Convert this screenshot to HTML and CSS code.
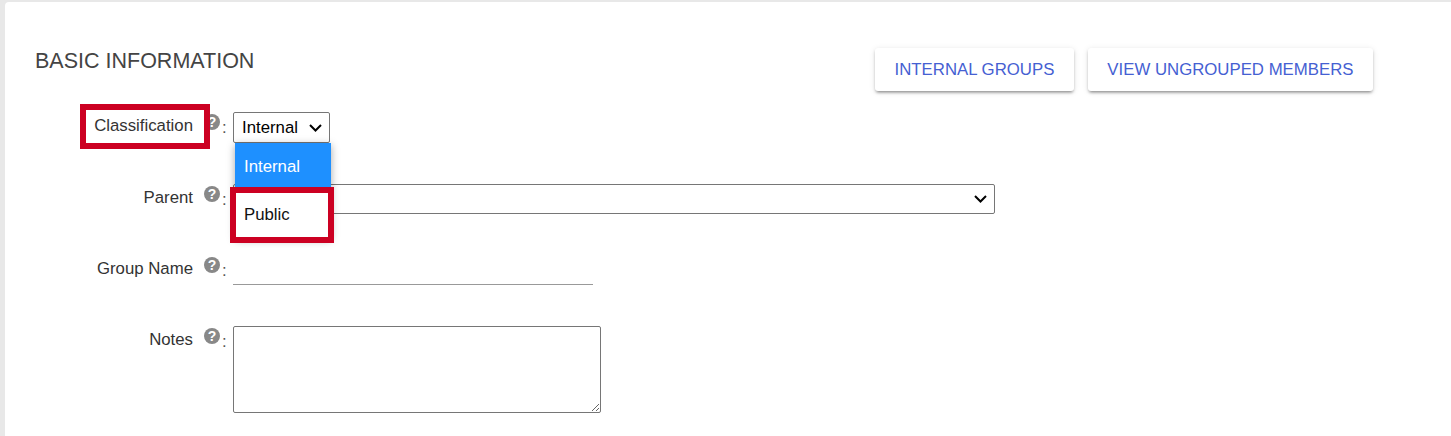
FILE: index.html
```html
<!DOCTYPE html>
<html lang="en">
<head>
    <meta charset="UTF-8">
    <meta name="viewport" content="width=device-width, initial-scale=1.0">
    <title>Basic Information</title>
    <link rel="stylesheet" href="styles.css">
</head>
<body>
    <div class="card">
        <div class="card-header">
            <h2>BASIC INFORMATION</h2>
            <div class="header-buttons">
                <button>INTERNAL GROUPS</button>
                <button>VIEW UNGROUPED MEMBERS</button>
            </div>
        </div>

        <form class="form">
            <div class="form-row row-classification">
                <label class="field-label"><span class="highlight label-highlight"></span>Classification</label>
                <span class="help">?</span>
                <span class="colon">:</span>
                <div class="select-wrap">
                    <div class="select select-small">
                        <span>Internal</span>
                        <svg class="chevron" width="13" height="8" viewBox="0 0 13 8"><path d="M1 1l5.500 5.500L12 1" fill="none" stroke="#000" stroke-width="2"/></svg>
                    </div>
                    <div class="menu">
                        <div class="menu-item active">Internal</div>
                        <div class="menu-item"><span class="highlight option-highlight"></span>Public</div>
                    </div>
                </div>
            </div>

            <div class="form-row row-parent">
                <label class="field-label">Parent</label>
                <span class="help">?</span>
                <span class="colon">:</span>
                <div class="select select-wide">
                    <svg class="chevron" width="13" height="8" viewBox="0 0 13 8"><path d="M1 1l5.500 5.500L12 1" fill="none" stroke="#000" stroke-width="2"/></svg>
                </div>
            </div>

            <div class="form-row row-name">
                <label class="field-label">Group Name</label>
                <span class="help">?</span>
                <span class="colon">:</span>
                <input class="text-input" type="text">
            </div>

            <div class="form-row">
                <label class="field-label">Notes</label>
                <span class="help">?</span>
                <span class="colon">:</span>
                <textarea class="notes"></textarea>
            </div>
        </form>
    </div>
</body>
</html>
```

FILE: styles.css
```css
* {
    margin: 0;
    padding: 0;
    box-sizing: border-box;
    font-family: 'Liberation Sans', Arial, sans-serif;
}

html, body {
    height: 100%;
    overflow: hidden;
}

body {
    background: #e8e8e8;
    padding: 2px 0 0 5px;
}

.card {
    background: white;
    height: 100%;
    border-radius: 4px 0 0 0;
    padding: 46px 78px 0 0;
}

.card-header {
    display: flex;
    justify-content: space-between;
    align-items: flex-start;
    padding-left: 30px;
    height: 64px;
}

.card-header h2 {
    margin-top: 1px;
    font-size: 21.500px;
    font-weight: normal;
    line-height: 25px;
    color: #444;
}

.header-buttons {
    display: flex;
    gap: 14px;
}

.header-buttons button {
    height: 43px;
    padding: 0 19.500px;
    background: white;
    color: #4560d2;
    border: none;
    border-radius: 3px;
    font-size: 16.800px;
    box-shadow: 0 3px 3px -2px rgba(0,0,0,0.3), 0 2px 3px 0 rgba(0,0,0,0.16), 0 1px 6px 0 rgba(0,0,0,0.1);
}

.form-row {
    display: flex;
    align-items: flex-start;
    margin-bottom: 41px;
    font-size: 16.800px;
}

.field-label {
    position: relative;
    width: 188px;
    padding-top: 5px;
    line-height: 18px;
    text-align: right;
    color: #333;
}

.help {
    width: 16px;
    height: 16px;
    margin: 2px 0 0 11px;
    border-radius: 50%;
    background: #888;
    color: white;
    font-size: 14px;
    font-weight: bold;
    line-height: 16px;
    text-align: center;
}

.colon {
    width: 13px;
    padding: 7px 0 0 2px;
    line-height: 18px;
    color: #555;
}

.select {
    display: flex;
    justify-content: space-between;
    align-items: center;
    border: 1px solid #767676;
    border-radius: 2px;
    background: white;
    color: #000;
}

.select-wrap {
    position: relative;
}

.select-small {
    width: 97px;
    height: 31px;
    padding: 0 7px 0 8px;
}

.select-wide {
    width: 762px;
    height: 30px;
    justify-content: flex-end;
    padding-right: 7px;
}

.menu {
    position: absolute;
    top: 31px;
    left: 2px;
    width: 96px;
    background: white;
    box-shadow: 0 2px 8px rgba(0,0,0,0.35);
    z-index: 2;
}

.menu-item {
    position: relative;
    height: 47.500px;
    padding-left: 9px;
    line-height: 47px;
    color: #111;
}

.menu-item.active {
    background: #1e90ff;
    color: white;
}

.highlight {
    position: absolute;
    border: 6px solid #cc0022;
}

.label-highlight {
    top: -8px;
    left: 75px;
    width: 130px;
    height: 45px;
}

.option-highlight {
    top: -3.500px;
    left: -5px;
    width: 104px;
    height: 56px;
}

.text-input {
    width: 360px;
    height: 30px;
    border: none;
    border-bottom: 1px solid #999;
    outline: none;
}

.notes {
    display: block;
    width: 368px;
    height: 87px;
    border: 1px solid #767676;
    border-radius: 2px;
}
```
